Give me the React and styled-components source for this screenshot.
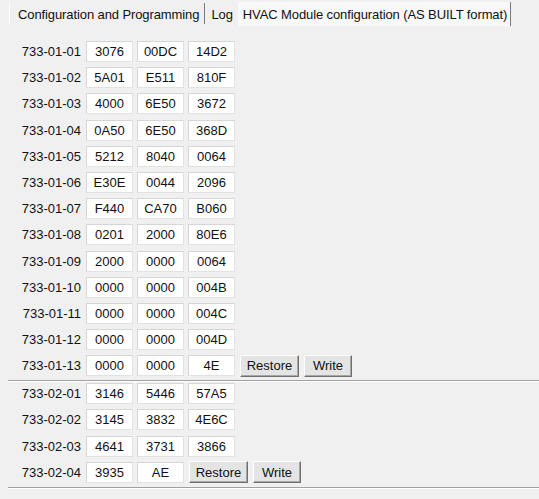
import React from "react";
import styled, { createGlobalStyle } from "styled-components";

const GlobalStyle = createGlobalStyle`
  html, body {
    margin: 0;
    padding: 0;
    background: #f0f0f0;
  }
  body {
    font-family: "Liberation Sans", Arial, sans-serif;
    font-size: 13px;
    color: #111;
  }
`;

const Window = styled.div`
  width: 539px;
  height: 499px;
  background: #f0f0f0;
  overflow: hidden;
`;

const TabBar = styled.div`
  display: flex;
  align-items: flex-end;
  height: 26px;
  padding-left: 9px;
`;

const Tab = styled.div`
  display: flex;
  align-items: center;
  height: ${props => (props.active ? "24px" : "21px")};
  margin-bottom: ${props => (props.active ? "0" : "2px")};
  padding: ${props => props.pad};
  background: ${props => (props.active ? "#f8f8f8" : "transparent")};
  border-left: 1px solid ${props => (props.first ? "#ffffff" : "transparent")};
  border-right: 1px solid ${props => (props.divider ? "#7a7a7a" : "transparent")};
  box-sizing: border-box;
  white-space: nowrap;
  letter-spacing: -0.1px;
`;

const Panel = styled.div`
  padding: 15px 0 0 8px;
`;

const Group = styled.div`
  display: flex;
  flex-direction: column;
  gap: 5.2px;
`;

const Row = styled.div`
  display: flex;
  align-items: center;
  gap: 4px;
  height: 21px;
`;

const Label = styled.span`
  width: 73px;
  margin-right: 1px;
  text-align: right;
  white-space: nowrap;
`;

const Cell = styled.div`
  width: 47px;
  height: 21px;
  box-sizing: border-box;
  display: flex;
  align-items: center;
  justify-content: center;
  background: #ffffff;
  border: 1px solid #e2e2e2;
  border-top-color: #d6d6d6;
  border-left-color: #d6d6d6;
`;

const Button = styled.button`
  height: 22px;
  width: ${props => props.w}px;
  margin-left: 1px;
  padding: 0;
  box-sizing: border-box;
  font: inherit;
  color: #111;
  background: #e4e4e4;
  border: 1px solid;
  border-color: #ffffff #6f6f6f #6f6f6f #ffffff;
  box-shadow: inset -1px -1px 0 #a7a7a7;
`;

const Separator = styled.div`
  height: 1px;
  margin: 4px 0 1px;
  background: #a0a0a0;
  border-bottom: 1px solid #ffffff;
`;

const module1 = [
  ["733-01-01", "3076", "00DC", "14D2"],
  ["733-01-02", "5A01", "E511", "810F"],
  ["733-01-03", "4000", "6E50", "3672"],
  ["733-01-04", "0A50", "6E50", "368D"],
  ["733-01-05", "5212", "8040", "0064"],
  ["733-01-06", "E30E", "0044", "2096"],
  ["733-01-07", "F440", "CA70", "B060"],
  ["733-01-08", "0201", "2000", "80E6"],
  ["733-01-09", "2000", "0000", "0064"],
  ["733-01-10", "0000", "0000", "004B"],
  ["733-01-11", "0000", "0000", "004C"],
  ["733-01-12", "0000", "0000", "004D"],
  ["733-01-13", "0000", "0000", "4E"],
];

const module2 = [
  ["733-02-01", "3146", "5446", "57A5"],
  ["733-02-02", "3145", "3832", "4E6C"],
  ["733-02-03", "4641", "3731", "3866"],
  ["733-02-04", "3935", "AE"],
];

const ModuleGroup = ({ rows }) => (
  <Group>
    {rows.map(([label, ...cells], index) => (
      <Row key={label}>
        <Label>{label}</Label>
        {cells.map((value, i) => (
          <Cell key={i}>{value}</Cell>
        ))}
        {index === rows.length - 1 && (
          <>
            <Button w={59}>Restore</Button>
            <Button w={48}>Write</Button>
          </>
        )}
      </Row>
    ))}
  </Group>
);

export default function App() {
  return (
    <Window>
      <GlobalStyle />
      <TabBar>
        <Tab first divider pad="1px 5px 0 8px">Configuration and Programming</Tab>
        <Tab pad="1px 4px 0 5px">Log</Tab>
        <Tab active divider pad="1px 3px 0 4px">HVAC Module configuration (AS BUILT format)</Tab>
      </TabBar>
      <Panel>
        <ModuleGroup rows={module1} />
        <Separator />
        <ModuleGroup rows={module2} />
        <Separator />
      </Panel>
    </Window>
  );
}
